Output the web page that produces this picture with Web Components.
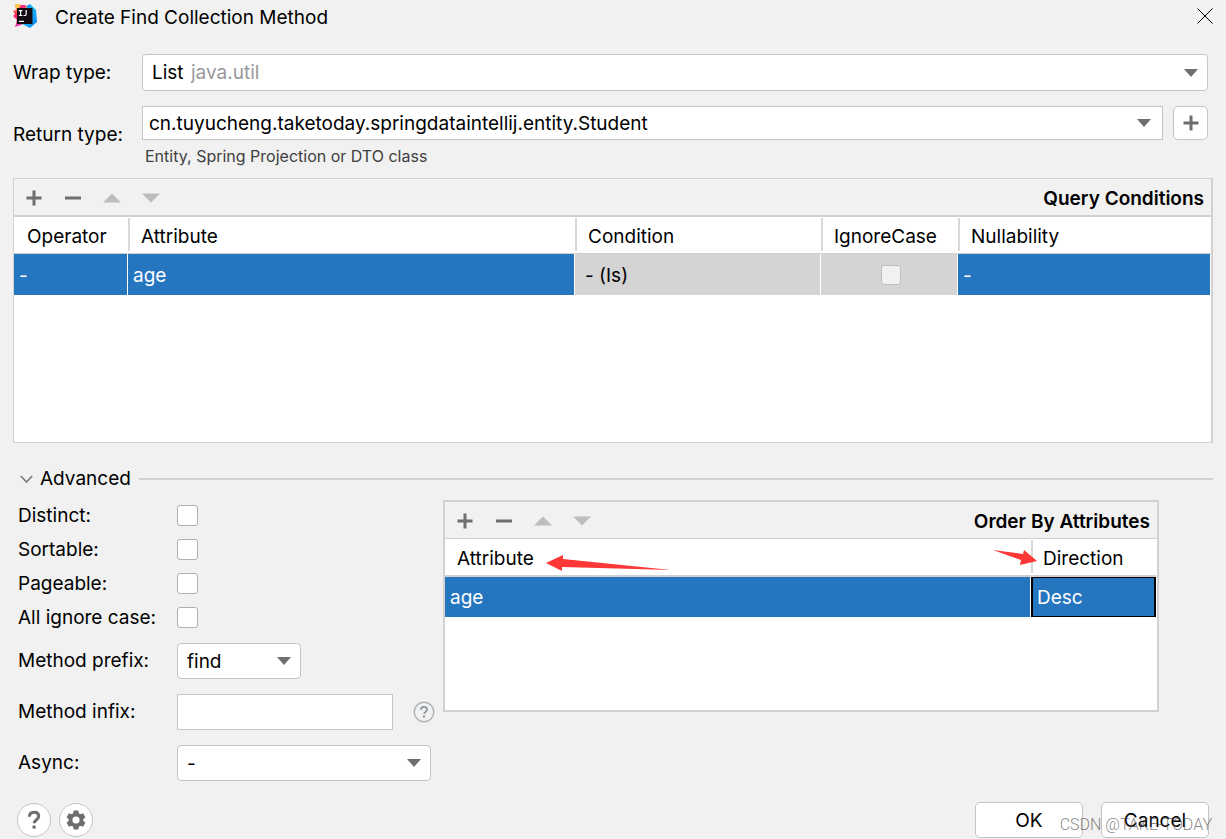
<!DOCTYPE html>
<html lang="en">
<head>
<meta charset="UTF-8">
<title>Create Find Collection Method</title>
<style>
    body {
        margin: 0;
        background: #f1f1f1;
        color: #000;
        font-family: Inter, "Liberation Sans", sans-serif;
        font-size: 19px;
        line-height: 24px;
    }
    .form {
        display: flex;
        flex-direction: column;
        padding: 20px 5px 10px 0;
        gap: 15px;
    }
    .advanced {
        display: grid;
        grid-template-columns: 425px 1fr;
        align-items: start;
        padding: 7px 54px 0 5px;
    }
    .options {
        --label-width: 159px;
        --field-height: 36px;
    }
    .fields {
        display: flex;
        flex-direction: column;
        gap: 15px;
        padding-top: 9px;
    }
    .order {
        margin-top: 2px;
    }
    .footer {
        display: flex;
        align-items: center;
        gap: 8px;
        padding: 21px 4px 0;
    }
    .buttons {
        display: flex;
        gap: 18px;
        margin-left: auto;
    }
</style>
</head>
<body>
<dialog-window>
    <title-bar>Create Find Collection Method</title-bar>

    <div class="form">
        <select-field label="Wrap type:" value="List" note="java.util"></select-field>
        <class-field label="Return type:" value="cn.tuyucheng.taketoday.springdataintellij.entity.Student"
            hint="Entity, Spring Projection or DTO class"></class-field>
    </div>

    <table-panel caption="Query Conditions" body-height="225"
        columns='[{"title":"Operator","width":114},{"title":"Attribute"},{"title":"Condition","width":246},{"title":"IgnoreCase","width":137},{"title":"Nullability","width":253}]'
        row='[{"text":"-"},{"text":"age"},{"text":"- (Is)","type":"off"},{"type":"check"},{"text":"-"}]'></table-panel>

    <section-title>Advanced</section-title>

    <div class="advanced">
        <div class="options">
            <check-field label="Distinct:"></check-field>
            <check-field label="Sortable:"></check-field>
            <check-field label="Pageable:"></check-field>
            <check-field label="All ignore case:"></check-field>
            <div class="fields">
                <select-field label="Method prefix:" value="find" width="124"></select-field>
                <text-field label="Method infix:" width="216"></text-field>
                <select-field label="Async:" value="-" width="254"></select-field>
            </div>
        </div>
        <table-panel class="order" caption="Order By Attributes" body-height="171" heavy
            columns='[{"title":"Attribute"},{"title":"Direction","width":125}]'
            row='[{"text":"age"},{"text":"Desc","type":"focus"}]'>
            <callout-arrow direction="left"></callout-arrow>
            <callout-arrow direction="right"></callout-arrow>
        </table-panel>
    </div>

    <div class="footer">
        <round-button icon="help" label="Help"></round-button>
        <round-button icon="gear" label="Settings"></round-button>
        <div class="buttons">
            <push-button>OK</push-button>
            <push-button>Cancel</push-button>
        </div>
    </div>

    <water-mark>CSDN @TAKE-TODAY</water-mark>
</dialog-window>

<script>
// Shared icons
const ICONS = {
    plus: '<svg width="16" height="16" viewBox="0 0 16 16"><path d="M6.5 0.5h3v6h6v3h-6v6h-3v-6h-6v-3h6z" fill="#6e6e6e"/></svg>',
    minus: '<svg width="16" height="16" viewBox="0 0 16 16"><path d="M0 6.5h16v3H0z" fill="#6e6e6e"/></svg>',
    up: '<svg width="18" height="10" viewBox="0 0 18 10"><path d="M0 9.5L9 0.5l9 9z" fill="#bdbdbd"/></svg>',
    down: '<svg width="18" height="10" viewBox="0 0 18 10"><path d="M0 0.5h18l-9 9z" fill="#bdbdbd"/></svg>',
    arrow: '<svg class="arrow" width="14" height="8" viewBox="0 0 14 8"><path d="M0 0h14L7 8z" fill="#6e6e6e"/></svg>',
    help: '<svg width="32" height="32" viewBox="0 0 32 32"><path d="M11.4 12.8c0-2.9 1.9-4.5 4.7-4.5s4.6 1.6 4.6 4c0 3.4-4.5 3.5-4.5 7" fill="none" stroke="#6e6e6e" stroke-width="3"/><path d="M14.5 21.6h3.2v3h-3.2z" fill="#6e6e6e"/></svg>',
    gear: '<svg width="32" height="32" viewBox="0 0 32 32"><g fill="#6e6e6e"><circle cx="16" cy="16" r="7.3"/><path d="M13.6 6.5h4.8l.7 4h-6.2zM13.6 25.5h4.8l.7-4h-6.2z"/><path d="M13.6 6.5h4.8l.7 4h-6.2zM13.6 25.5h4.8l.7-4h-6.2z" transform="rotate(60 16 16)"/><path d="M13.6 6.5h4.8l.7 4h-6.2zM13.6 25.5h4.8l.7-4h-6.2z" transform="rotate(120 16 16)"/></g><circle cx="16" cy="16" r="3.6" fill="#fff"/></svg>'
};

const FIELD_CSS = `
    * { box-sizing: border-box; }
    :host { display: block; }
    .row {
        display: grid;
        grid-template-columns: var(--label-width, 129px) 1fr;
        align-items: center;
    }
    .combo { display: grid; align-items: center; }
    .combo > * { grid-area: 1 / 1; }
    select, input {
        width: 100%;
        height: var(--field-height, 37px);
        margin: 0;
        border: 1px solid #c4c4c4;
        background: #fff;
        color: #000;
        font: inherit;
        outline: none;
    }
    select {
        appearance: none;
        border-radius: 4px;
        padding: 1px 30px 0 9px;
    }
    .arrow {
        justify-self: end;
        margin-right: 10px;
        pointer-events: none;
    }
`;

class DialogWindow extends HTMLElement {
    constructor() {
        super();
        const shadow = this.attachShadow({ mode: 'open' });
        shadow.innerHTML = `
            <style>
                :host {
                    display: block;
                    position: relative;
                    padding: 0 13px 1px;
                }
            </style>
            <slot></slot>
        `;
    }
}

class TitleBar extends HTMLElement {
    constructor() {
        super();
        const shadow = this.attachShadow({ mode: 'open' });
        shadow.innerHTML = `
            <style>
                :host {
                    display: flex;
                    align-items: center;
                    height: 34px;
                }
                svg { margin-bottom: 2px; }
                .title { padding: 2px 0 0 18px; }
                button {
                    display: flex;
                    margin-left: auto;
                    padding: 0;
                    border: 0;
                    background: none;
                }
            </style>
            <svg width="24" height="24" viewBox="0 0 24 24">
                <defs>
                    <linearGradient id="cool" x1="0" y1="0" x2="1" y2="1">
                        <stop offset="0" stop-color="#087cfa"/><stop offset=".45" stop-color="#16b8f5"/><stop offset="1" stop-color="#087cfa"/>
                    </linearGradient>
                    <linearGradient id="warm" x1="0" y1="0" x2="0" y2="1">
                        <stop offset="0" stop-color="#fdb62c"/><stop offset=".45" stop-color="#fe2857"/><stop offset="1" stop-color="#e43bb4"/>
                    </linearGradient>
                </defs>
                <path d="M12 3l5-3 6 6 1 12-7 6-8-4z" fill="url(#cool)"/>
                <path d="M2 0h4l8 3 1 14-7 4-6 2 2-7-4-4 2-2-2-3 3-1z" fill="url(#warm)"/>
                <path d="M2 0h4l3 4-5 3z" fill="#ffc84a"/>
                <path d="M8 1h5l-1 3H6z" fill="#ff2d7b"/>
                <path d="M4 4h15.5v16H4z" fill="#140a12"/>
                <path d="M5.8 6.6h3.6M7.6 6.6v5M5.8 11.5h3.6M13.2 6v3.9q0 1.6-1.4 1.6h-1.3M6 17.4h5" fill="none" stroke="#fff" stroke-width="1.2"/>
            </svg>
            <span class="title"><slot></slot></span>
            <button aria-label="Close">
                <svg width="16" height="16" viewBox="0 0 16 16"><path d="M.5.5l15 15M15.5.5l-15 15" stroke="#000" stroke-width="1"/></svg>
            </button>
        `;
    }
}

class SelectField extends HTMLElement {
    constructor() {
        super();
        const shadow = this.attachShadow({ mode: 'open' });
        const label = this.getAttribute('label');
        const value = this.getAttribute('value');
        const note = this.getAttribute('note');
        const width = this.getAttribute('width');
        shadow.innerHTML = `
            <style>
                ${FIELD_CSS}
                .combo { width: ${width ? width + 'px' : '100%'}; }
                .note {
                    margin-left: 49px;
                    color: #999;
                    pointer-events: none;
                }
            </style>
            <div class="row">
                <label for="field">${label}</label>
                <div class="combo">
                    <select id="field"><option>${value}</option></select>
                    ${note ? `<span class="note">${note}</span>` : ''}
                    ${ICONS.arrow}
                </div>
            </div>
        `;
    }
}

// Editable combo box with a "new class" button and a hint line
class ClassField extends HTMLElement {
    constructor() {
        super();
        const shadow = this.attachShadow({ mode: 'open' });
        shadow.innerHTML = `
            <style>
                ${FIELD_CSS}
                .line {
                    display: grid;
                    grid-template-columns: 1fr 35px;
                    gap: 10px;
                }
                label { padding-bottom: 4px; }
                input {
                    height: 34px;
                    padding: 0 34px 0 6px;
                }
                .arrow { margin-right: 12px; }
                button {
                    display: flex;
                    align-items: center;
                    justify-content: center;
                    padding: 0;
                    border: 1px solid #c4c4c4;
                    border-radius: 5px;
                    background: #fff;
                }
                .hint {
                    padding: 4px 0 0 3px;
                    color: #404040;
                    font-size: 16px;
                }
            </style>
            <div class="row">
                <label for="field">${this.getAttribute('label')}</label>
                <div>
                    <div class="line">
                        <div class="combo">
                            <input id="field" type="text" value="${this.getAttribute('value')}">
                            ${ICONS.arrow}
                        </div>
                        <button aria-label="New class">${ICONS.plus}</button>
                    </div>
                    <div class="hint">${this.getAttribute('hint')}</div>
                </div>
            </div>
        `;
    }
}

class TextField extends HTMLElement {
    constructor() {
        super();
        const shadow = this.attachShadow({ mode: 'open' });
        shadow.innerHTML = `
            <style>
                ${FIELD_CSS}
                .line {
                    display: flex;
                    align-items: center;
                    gap: 20px;
                }
                input { width: ${this.getAttribute('width')}px; padding: 0 6px; }
            </style>
            <div class="row">
                <label for="field">${this.getAttribute('label')}</label>
                <div class="line">
                    <input id="field" type="text">
                    <svg width="22" height="22" viewBox="0 0 22 22" fill="none">
                        <circle cx="11" cy="11" r="9.8" stroke="#a9b4bc" stroke-width="1.4"/>
                        <path d="M7.9 8.8c0-2 1.2-3 3.1-3s3.1 1 3.1 2.7c0 2.3-3 2.4-3 4.6" stroke="#8a949c" stroke-width="1.8"/>
                        <path d="M10 14.4h2v2h-2z" fill="#8a949c"/>
                    </svg>
                </div>
            </div>
        `;
    }
}

class CheckField extends HTMLElement {
    constructor() {
        super();
        const shadow = this.attachShadow({ mode: 'open' });
        shadow.innerHTML = `
            <style>
                ${FIELD_CSS}
                .row { height: 34px; }
                label { padding-top: 1px; }
                input {
                    appearance: none;
                    width: 21px;
                    height: 21px;
                    border-color: #b0b0b0;
                    border-radius: 3px;
                }
            </style>
            <div class="row">
                <label for="field">${this.getAttribute('label')}</label>
                <input id="field" type="checkbox">
            </div>
        `;
    }
}

class SectionTitle extends HTMLElement {
    constructor() {
        super();
        const shadow = this.attachShadow({ mode: 'open' });
        shadow.innerHTML = `
            <style>
                :host {
                    display: flex;
                    align-items: center;
                    gap: 8px;
                    padding: 24px 0 0 7px;
                }
                button {
                    display: flex;
                    align-items: center;
                    gap: 7px;
                    padding: 0;
                    border: 0;
                    background: none;
                    color: inherit;
                    font: inherit;
                }
                .rule {
                    flex: 1;
                    height: 2px;
                    background: #d1d1d1;
                }
            </style>
            <button aria-expanded="true">
                <svg width="13" height="9" viewBox="0 0 13 9"><path d="M.8 1l5.7 6 5.7-6" fill="none" stroke="#7f7f7f" stroke-width="1.8"/></svg>
                <slot></slot>
            </button>
            <div class="rule"></div>
        `;
    }
}

class TablePanel extends HTMLElement {
    constructor() {
        super();
        const shadow = this.attachShadow({ mode: 'open' });
        const columns = JSON.parse(this.getAttribute('columns'));
        const row = JSON.parse(this.getAttribute('row'));

        let colsHtml = '';
        let headHtml = '';
        columns.forEach(col => {
            colsHtml += `<col ${col.width ? `style="width: ${col.width}px"` : ''}>`;
            headHtml += `<th scope="col">${col.title}</th>`;
        });

        let cellsHtml = '';
        row.forEach(cell => {
            const content = cell.type === 'check'
                ? '<input type="checkbox" aria-label="Ignore case" disabled>'
                : cell.text;
            cellsHtml += `<td class="${cell.type || ''}">${content}</td>`;
        });

        shadow.innerHTML = `
            <style>
                * { box-sizing: border-box; }
                :host {
                    display: block;
                    position: relative;
                    border: 1px solid #d1d1d1;
                    border-right-width: 2px;
                    background: #fff;
                }
                :host([heavy]) { border-width: 2px; }
                .toolbar {
                    display: flex;
                    align-items: center;
                    height: 38px;
                    padding: 2px 7px 0 0;
                    border-bottom: 2px solid #d1d1d1;
                    background: #f1f1f1;
                }
                :host([heavy]) .toolbar {
                    height: 37px;
                    border-bottom-width: 1px;
                }
                .toolbar button {
                    display: flex;
                    align-items: center;
                    justify-content: center;
                    width: 39px;
                    height: 34px;
                    padding: 0;
                    border: 0;
                    background: none;
                }
                .caption {
                    margin-left: auto;
                    padding-top: 2px;
                    font-weight: 600;
                }
                .body { min-height: ${this.getAttribute('body-height')}px; }
                :host([heavy]) .body { padding-right: 1px; }
                table {
                    width: 100%;
                    table-layout: fixed;
                    border-collapse: separate;
                    border-spacing: 0;
                }
                th {
                    height: 37px;
                    padding: 3px 0 0 13px;
                    border-bottom: 1px solid #d1d1d1;
                    font-weight: 400;
                    text-align: left;
                }
                th + th { background: linear-gradient(#d8d8d8, #d8d8d8) 0 1px / 2px 33px no-repeat; }
                :host([heavy]) th {
                    height: 38px;
                    padding-left: 12px;
                    border-bottom-width: 2px;
                }
                td {
                    height: 41px;
                    padding: 2px 0 0 5px;
                    border-right: 1px solid #fff;
                    background: #2675bf;
                    color: #fff;
                }
                :host([heavy]) td { height: 40px; }
                td.off, td.check {
                    background: #d4d4d4;
                    color: #000;
                }
                td.off { padding-left: 10px; }
                td.check {
                    padding: 0 0 0 4px;
                    text-align: center;
                }
                td.focus {
                    padding-left: 4px;
                    border: solid #000;
                    border-width: 1px 2px;
                }
                input {
                    appearance: none;
                    display: inline-block;
                    width: 20px;
                    height: 20px;
                    margin: 0;
                    border: 1px solid #bdbdbd;
                    border-radius: 3px;
                    background: #f1f1f1;
                    vertical-align: middle;
                }
            </style>
            <div class="toolbar" role="toolbar">
                <button aria-label="Add">${ICONS.plus}</button>
                <button aria-label="Remove">${ICONS.minus}</button>
                <button aria-label="Move up" disabled>${ICONS.up}</button>
                <button aria-label="Move down" disabled>${ICONS.down}</button>
                <span class="caption">${this.getAttribute('caption')}</span>
            </div>
            <div class="body">
                <table>
                    <colgroup>${colsHtml}</colgroup>
                    <thead><tr>${headHtml}</tr></thead>
                    <tbody><tr>${cellsHtml}</tr></tbody>
                </table>
            </div>
            <slot></slot>
        `;
    }
}

// Red marker arrows lying over the table header
class CalloutArrow extends HTMLElement {
    constructor() {
        super();
        const shadow = this.attachShadow({ mode: 'open' });
        const left = this.getAttribute('direction') === 'left';
        shadow.innerHTML = `
            <style>
                :host {
                    position: absolute;
                    pointer-events: none;
                    ${left ? 'left: 101px; top: 53px;' : 'right: 119px; top: 48px;'}
                }
                svg { display: block; }
            </style>
            ${left
                ? '<svg width="126" height="17" viewBox="0 0 126 17"><path d="M0 8L17 0v4l108 11L16 12v4z" fill="#fe3737"/></svg>'
                : '<svg width="45" height="16" viewBox="0 0 45 16"><path d="M0 0l30 4 1-4 13 11-17 4 1-5z" fill="#fe3737"/></svg>'}
        `;
    }
}

class RoundButton extends HTMLElement {
    constructor() {
        super();
        const shadow = this.attachShadow({ mode: 'open' });
        shadow.innerHTML = `
            <style>
                :host { display: block; }
                button {
                    display: flex;
                    padding: 0;
                    border: 1px solid #c4c4c4;
                    border-radius: 50%;
                    background: #fff;
                }
            </style>
            <button aria-label="${this.getAttribute('label')}">${ICONS[this.getAttribute('icon')]}</button>
        `;
    }
}

class PushButton extends HTMLElement {
    constructor() {
        super();
        const shadow = this.attachShadow({ mode: 'open' });
        shadow.innerHTML = `
            <style>
                :host { display: block; }
                button {
                    min-width: 108px;
                    height: 36px;
                    padding: 2px 12px 0;
                    border: 1px solid #c4c4c4;
                    border-radius: 5px;
                    background: #fff;
                    color: inherit;
                    font: inherit;
                }
            </style>
            <button><slot></slot></button>
        `;
    }
}

class WaterMark extends HTMLElement {
    constructor() {
        super();
        const shadow = this.attachShadow({ mode: 'open' });
        shadow.innerHTML = `
            <style>
                :host {
                    position: absolute;
                    right: 14px;
                    bottom: 2px;
                    color: rgba(80, 80, 80, 0.7);
                    font-family: Roboto, "Liberation Sans", sans-serif;
                    font-size: 16px;
                    font-weight: 300;
                    pointer-events: none;
                }
            </style>
            <slot></slot>
        `;
    }
}

customElements.define('dialog-window', DialogWindow);
customElements.define('title-bar', TitleBar);
customElements.define('select-field', SelectField);
customElements.define('class-field', ClassField);
customElements.define('text-field', TextField);
customElements.define('check-field', CheckField);
customElements.define('section-title', SectionTitle);
customElements.define('table-panel', TablePanel);
customElements.define('callout-arrow', CalloutArrow);
customElements.define('round-button', RoundButton);
customElements.define('push-button', PushButton);
customElements.define('water-mark', WaterMark);
</script>
</body>
</html>
